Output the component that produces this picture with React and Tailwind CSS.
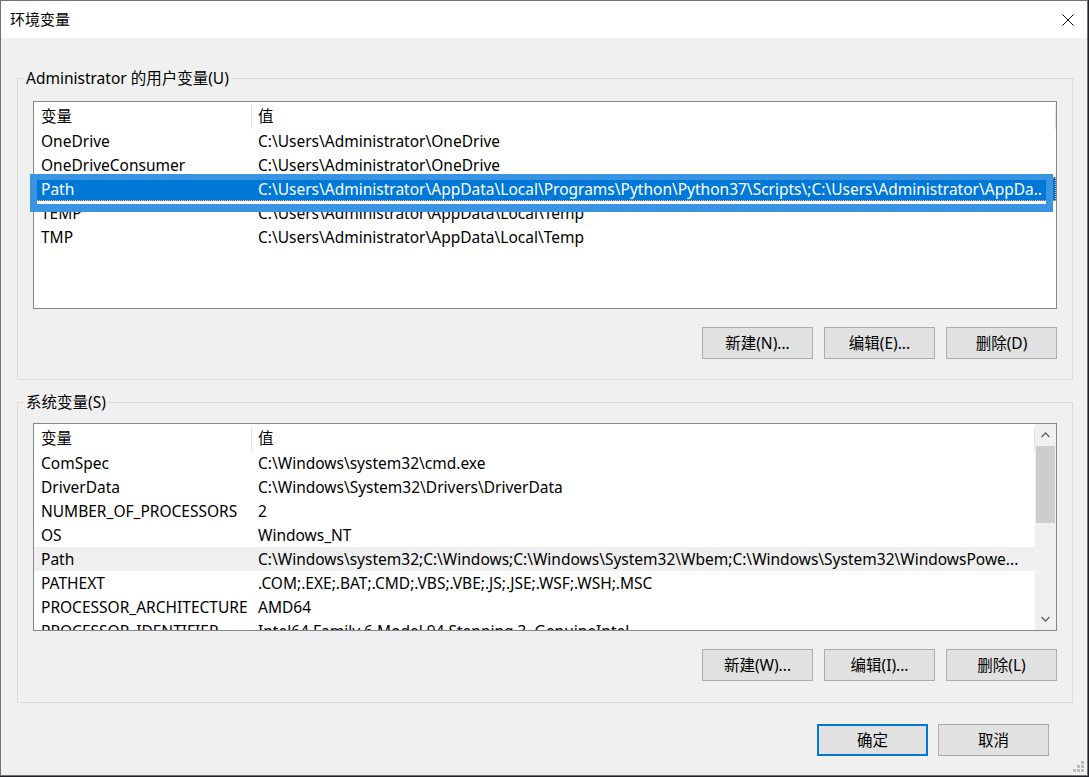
import React from 'react'

// 环境变量 dialog — Windows 10 style, two list views with button rows.

const userVars = [
  ['OneDrive', 'C:\\Users\\Administrator\\OneDrive'],
  ['OneDriveConsumer', 'C:\\Users\\Administrator\\OneDrive'],
  ['Path', 'C:\\Users\\Administrator\\AppData\\Local\\Programs\\Python\\Python37\\Scripts\\;C:\\Users\\Administrator\\AppDa..'],
  ['TEMP', 'C:\\Users\\Administrator\\AppData\\Local\\Temp'],
  ['TMP', 'C:\\Users\\Administrator\\AppData\\Local\\Temp'],
]

const sysVars = [
  ['ComSpec', 'C:\\Windows\\system32\\cmd.exe'],
  ['DriverData', 'C:\\Windows\\System32\\Drivers\\DriverData'],
  ['NUMBER_OF_PROCESSORS', '2'],
  ['OS', 'Windows_NT'],
  ['Path', 'C:\\Windows\\system32;C:\\Windows;C:\\Windows\\System32\\Wbem;C:\\Windows\\System32\\WindowsPowe...'],
  ['PATHEXT', '.COM;.EXE;.BAT;.CMD;.VBS;.VBE;.JS;.JSE;.WSF;.WSH;.MSC'],
  ['PROCESSOR_ARCHITECTURE', 'AMD64'],
  ['PROCESSOR_IDENTIFIER', 'Intel64 Family 6 Model 94 Stepping 3, GenuineIntel'],
]

function Button({ children, primary }) {
  return (
    <div
      className={
        primary
          ? 'w-[111px] h-[32px] pt-px flex items-center justify-center bg-[#e1e1e1] border-2 border-[#0078d7] text-black'
          : 'w-[111px] h-[32px] pt-px flex items-center justify-center bg-[#e1e1e1] border border-[#adadad] text-black'
      }
    >
      {children}
    </div>
  )
}

function Header() {
  return (
    <div className="h-[27px] pt-[3px] flex shrink-0">
      <div className="w-[218px] pl-[7px] flex items-center border-r border-[#e5e5e5]">变量</div>
      <div className="flex-1 pl-[6px] flex items-center border-r border-[#e5e5e5]">值</div>
    </div>
  )
}

function Row({ name, value, selected, hovered }) {
  let cls = 'relative h-[24px] pt-[2px] flex items-center shrink-0 whitespace-nowrap'
  if (selected) cls += ' bg-[#0078d7] text-white'
  if (hovered) cls += ' bg-[#efefef]'
  return (
    <div className={cls}>
      {selected && <span className="absolute inset-0 border border-dotted border-[#f3b26b]" />}
      <div className="w-[218px] pl-[7px] shrink-0">{name}</div>
      <div className="flex-1 pl-[6px] overflow-hidden">{value}</div>
    </div>
  )
}

function ScrollBar() {
  return (
    <div className="w-[21px] shrink-0 bg-[#f0f0f0] flex flex-col">
      <div className="h-[22px] flex items-center justify-center">
        <svg width="9" height="6" viewBox="0 0 9 6" fill="none">
          <path d="M0.5 5 L4.5 1 L8.5 5" stroke="#606060" strokeWidth="1.3" />
        </svg>
      </div>
      <div className="h-[77px] mx-px bg-[#cdcdcd]" />
      <div className="flex-1" />
      <div className="h-[22px] flex items-center justify-center">
        <svg width="9" height="6" viewBox="0 0 9 6" fill="none">
          <path d="M0.5 1 L4.5 5 L8.5 1" stroke="#606060" strokeWidth="1.3" />
        </svg>
      </div>
    </div>
  )
}

function GroupBox({ label, children, className }) {
  return (
    <div className={'relative ml-[16px] w-[1056px] border border-[#dcdcdc] ' + className}>
      <span className="absolute left-[6px] top-[-11px] px-[2px] leading-[20px] bg-[#f0f0f0]">{label}</span>
      {children}
    </div>
  )
}

export default function App() {
  return (
    <div className="w-[1089px] h-[777px] bg-[#1f2329] font-[family-name:'Noto_Sans','Noto_Sans_CJK_SC',sans-serif] text-[15.5px] text-black">
      <div className="relative w-[1088px] h-[776px] border border-[#747474] bg-[#f0f0f0] flex flex-col">
        {/* title bar */}
        <div className="h-[37px] bg-white flex items-center justify-between shrink-0">
          <span className="pl-[9px] text-[15px]">环境变量</span>
          <svg className="mr-[13px]" width="12" height="12" viewBox="0 0 12 12" fill="none">
            <path d="M0.5 0.5 L11.5 11.5 M11.5 0.5 L0.5 11.5" stroke="#111" strokeWidth="1" />
          </svg>
        </div>

        {/* user variables */}
        <GroupBox label="Administrator 的用户变量(U)" className="mt-[40px] pb-[20px]">
          <div className="relative ml-[15px] mt-[22px] w-[1024px]">
            <div className="h-[208px] border border-[#828790] bg-white flex flex-col overflow-hidden">
              <Header />
              {userVars.map(([n, v]) => (
                <Row key={n} name={n} value={v} selected={n === 'Path'} />
              ))}
            </div>
            {/* annotation frame round the selected Path row */}
            <span className="absolute left-[-3px] top-[73px] w-[1023px] h-[38px] border-x-[7px] border-t-[6px] border-b-[8px] border-[#3995e4]" />
          </div>
          <div className="ml-[15px] mt-[18px] w-[1024px] flex justify-end gap-[11px]">
            <Button>新建(N)...</Button>
            <Button>编辑(E)...</Button>
            <Button>删除(D)</Button>
          </div>
        </GroupBox>

        {/* system variables */}
        <GroupBox label="系统变量(S)" className="mt-[22px] pb-[21px]">
          <div className="ml-[15px] mt-[20px] w-[1024px] h-[208px] border border-[#828790] bg-white flex overflow-hidden">
            <div className="flex-1 flex flex-col overflow-hidden">
              <Header />
              {sysVars.map(([n, v]) => (
                <Row key={n} name={n} value={v} hovered={n === 'Path'} />
              ))}
            </div>
            <ScrollBar />
          </div>
          <div className="ml-[15px] mt-[18px] w-[1024px] flex justify-end gap-[11px]">
            <Button>新建(W)...</Button>
            <Button>编辑(I)...</Button>
            <Button>删除(L)</Button>
          </div>
        </GroupBox>

        {/* dialog buttons */}
        <div className="mt-[21px] mr-[38px] flex justify-end gap-[10px]">
          <Button primary>确定</Button>
          <Button>取消</Button>
        </div>

        {/* resize grip */}
        <svg className="absolute right-[2px] bottom-[2px]" width="12" height="12" viewBox="0 0 12 12">
          <rect x="8" y="0" width="3" height="3" fill="#bcbcbc" />
          <rect x="4" y="4" width="3" height="3" fill="#bcbcbc" />
          <rect x="8" y="4" width="3" height="3" fill="#bcbcbc" />
          <rect x="0" y="8" width="3" height="3" fill="#bcbcbc" />
          <rect x="4" y="8" width="3" height="3" fill="#bcbcbc" />
          <rect x="8" y="8" width="3" height="3" fill="#bcbcbc" />
        </svg>
      </div>
    </div>
  )
}
